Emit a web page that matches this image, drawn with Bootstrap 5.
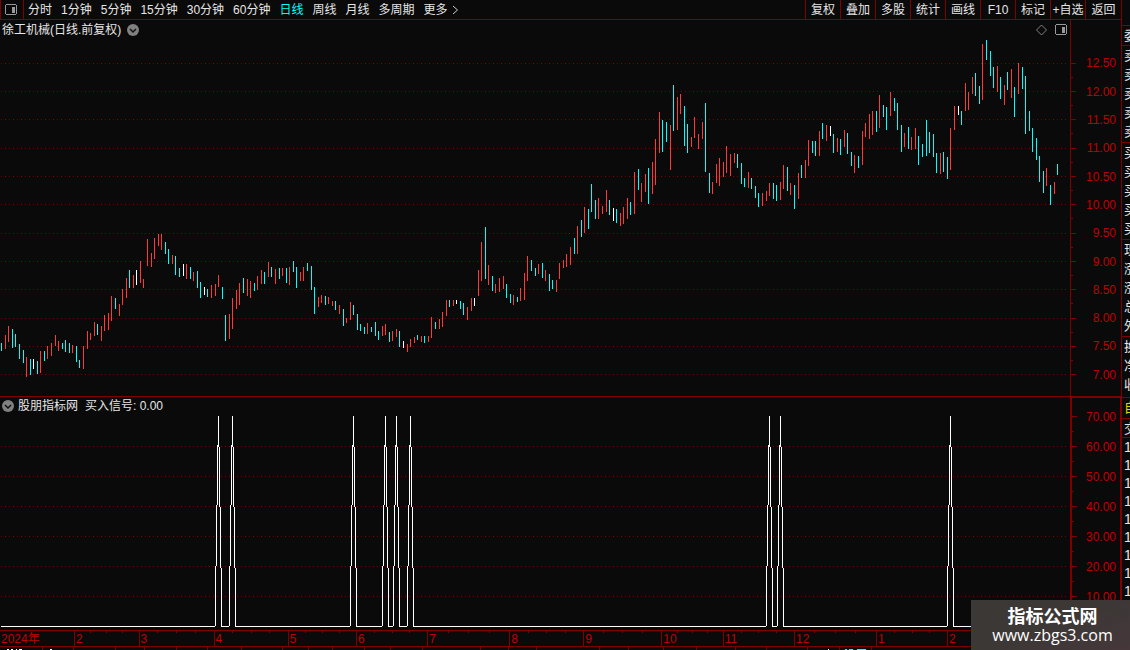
<!DOCTYPE html>
<html lang="zh-CN">
<head>
<meta charset="utf-8">
<meta name="viewport" content="width=device-width, initial-scale=1">
<title>徐工机械 日线</title>
<link href="https://cdn.jsdelivr.net/npm/bootstrap@5.3.0/dist/css/bootstrap.min.css" rel="stylesheet">
<style>
:root{--line:#800000;--label:#c00000;--paper:#0a0a0a}
body{background:var(--paper);color:#e6e6e6;font:12px/18px "Liberation Sans","Noto Sans CJK SC",sans-serif}
button{background:none;border:0;padding:0;color:inherit;font:inherit;line-height:18px;white-space:nowrap}
main{min-width:0}
svg{display:block;shape-rendering:crispEdges}
svg.smooth{shape-rendering:auto}
.toolbar{height:20px;border-bottom:1px solid var(--line)}
.layout-btn{width:24px;border:solid var(--line);border-width:0 1px;padding-left:4px}
.periods{gap:9px;padding-left:4px}
.periods .active{color:#0ff}
.tools button{width:35px;border-left:1px solid var(--line);text-align:center}
.tools button:last-child{width:36px}
.pane{min-height:0;flex-basis:0}
.pane-price{flex-grow:376}
.pane-signal{flex-grow:233;border-top:1px solid var(--line)}
.plot svg.fill{position:absolute;inset:0;width:100%;height:100%}
.caption{position:absolute;left:2px;top:0;right:3px;padding-top:1px}
.pane-signal .caption{left:1px;padding-top:0;gap:3px}
.yscale{width:51px;border-left:1px solid var(--line);color:var(--label);position:relative}
.pane-signal .yscale{border:solid var(--line);border-width:1px 1px 0 2px}
.yscale svg{position:absolute;left:0;top:0;width:5px;height:100%}
.yscale div{min-height:0;flex-basis:0;display:flex;align-items:center;justify-content:flex-end;padding-right:5px}
.pane-signal .yscale div{padding-right:4px}
.months{height:17px;border:solid var(--line);border-width:1px 0;color:var(--label);padding-right:51px}
.month{position:relative;flex-basis:0;min-width:0;border-left:1px solid var(--line);padding-left:1px;line-height:17px;white-space:nowrap}
.month:first-child{border-left:0}
.ticks{position:absolute;inset:0 0 auto 0;height:2px}
.ticks i{flex:1}
.ticks i+i{border-left:1px solid var(--line)}
.side{width:9px;border-left:1px solid var(--line);overflow:hidden}
.side section{border-bottom:1px solid var(--line);padding:0 0 1px 2px;white-space:nowrap;flex:none;font-size:13px}
.side section div{height:19px;line-height:19px}
.side .spacer{height:26px}
.side .single{padding-bottom:0}
.side .detail{padding-bottom:3px}
.side .chosen{color:#dada00}
.side .single.deal div{height:18px}
.side .trades{border:0}
.side .trades div{height:18px;line-height:18px;font-size:14px}
.site{position:absolute;right:0;bottom:0;width:159px;height:50px;background:linear-gradient(160deg,#3b3836 45%,#46373a);color:#fff;text-align:center;padding:4px 0 0 4px}
.site strong{display:block;font:bold 18px/22px "Noto Sans CJK SC",sans-serif}
.site a{display:block;color:#fff;text-decoration:none;font:16px/18px "Open Sans",sans-serif}
</style>
</head>
<body class="vh-100 d-flex overflow-hidden position-relative">
<main class="d-flex flex-column flex-grow-1">
  <nav class="toolbar d-flex flex-shrink-0" aria-label="周期">
    <button class="layout-btn" aria-label="布局"><svg width="13" height="12"><rect x=".5" y=".5" width="11" height="10" rx="2" fill="none" stroke="#999"/><rect x="7" y="3" width="3" height="6" fill="#999"/></svg></button>
    <div class="periods d-flex">
      <button>分时</button><button>1分钟</button><button>5分钟</button><button>15分钟</button><button>30分钟</button><button>60分钟</button><button class="active">日线</button><button>周线</button><button>月线</button><button>多周期</button><button class="d-flex align-items-center gap-1">更多 <svg class="smooth" width="7" height="10"><path d="M1 1l4.500 4L1 9" fill="none" stroke="#ccc"/></svg></button>
    </div>
    <div class="tools d-flex ms-auto">
      <button>复权</button><button>叠加</button><button>多股</button><button>统计</button><button>画线</button><button>F10</button><button>标记</button><button>+自选</button><button>返回</button>
    </div>
  </nav>
  <section class="pane pane-price d-flex">
    <div class="plot flex-grow-1 position-relative">
      <svg class="fill" id="price" viewBox="0 20 1070 376" preserveAspectRatio="none"></svg>
      <div class="caption d-flex align-items-center">
        <span>徐工机械(日线.前复权)</span>
        <svg class="smooth ms-1" width="14" height="14"><circle cx="8" cy="7" r="6" fill="#808080"/><path d="M5 6l3 3 3-3" fill="none" stroke="#111" stroke-width="1.500"/></svg>
        <svg class="smooth ms-auto" width="12" height="12"><path d="M6.500 1l5 5-5 5-5-5z" fill="none" stroke="#808080"/></svg>
        <svg class="ms-2" width="12" height="12"><rect x=".5" y=".5" width="11" height="10" rx="2" fill="none" stroke="#999"/><rect x="7" y="3" width="3" height="6" fill="#999"/></svg>
      </div>
    </div>
    <div class="yscale d-flex flex-column" id="priceScale"></div>
  </section>
  <section class="pane pane-signal d-flex">
    <div class="plot flex-grow-1 position-relative">
      <svg class="fill" id="signal" viewBox="0 397 1070 233" preserveAspectRatio="none"></svg>
      <div class="caption d-flex align-items-center">
        <svg class="smooth" width="14" height="14"><circle cx="7" cy="7" r="6" fill="#808080"/><path d="M4 6l3 3 3-3" fill="none" stroke="#111" stroke-width="1.500"/></svg>
        <span>股朋指标网</span><span class="ps-1">买入信号: 0.00</span>
      </div>
    </div>
    <div class="yscale d-flex flex-column" id="signalScale"></div>
  </section>
  <div class="months d-flex flex-shrink-0" id="months"></div>
  <svg class="flex-shrink-0" id="tabs" width="100%" height="3" viewBox="0 647 1121 3" preserveAspectRatio="none"></svg>
</main>
<aside class="side d-flex flex-column flex-shrink-0" aria-label="盘口">
  <section class="spacer"></section>
  <section class="single"><div>委</div></section>
  <section><div>卖</div><div>卖</div><div>卖</div><div>卖</div><div>卖</div></section>
  <section><div>买</div><div>买</div><div>买</div><div>买</div><div>买</div></section>
  <section><div>现</div><div>涨</div><div>涨</div><div>总</div><div>外</div></section>
  <section class="detail"><div>换</div><div>净</div><div>收</div></section>
  <section class="chosen"><div>自</div></section>
  <section class="single deal"><div>交</div></section>
  <section class="trades"><div>1</div><div>1</div><div>1</div><div>1</div><div>1</div><div>1</div><div>1</div><div>1</div><div>1</div></section>
</aside>
<footer class="site"><strong>指标公式网</strong><a href="#">www.zbgs3.com</a></footer>
<script src="https://cdn.jsdelivr.net/npm/bootstrap@5.3.0/dist/js/bootstrap.bundle.min.js"></script>
<script>
// one bar per trading day: x, high, low, colour (c falling, r rising, w unchanged)
const bars = `1 343 351c,5 335 349r,8 326 342r,12 329 348c,15 334 347c,19 344 359c,23 350 363c,26 357 377r,30 359 375c,33 359 369w,37 361 374c,40 351 373r,44 351 361c,47 346 359r,51 343 356r,55 335 346r,58 341 351r,62 343 349c,65 340 352c,69 343 353c,72 345 353r,76 346 362c,79 360 368c,83 346 369r,87 331 349r,90 333 340r,94 322 336r,97 324 335c,101 326 341r,104 315 331r,108 313 330r,111 296 321r,115 298 309c,119 304 316r,122 289 305r,126 278 298r,129 270 288c,133 275 288r,136 270 285w,140 261 283r,143 279 288r,147 239 266r,151 253 267r,154 238 259r,158 234 246r,161 234 250r,165 242 254c,168 249 264c,172 255 264r,175 256 275c,179 268 277c,183 264 276w,186 264 279r,190 267 279c,193 272 281r,197 271 288c,200 282 298c,204 287 295w,207 289 297c,211 285 298r,215 284 296r,218 275 287r,222 287 299c,225 315 341c,229 314 339r,232 298 329r,236 290 309r,239 283 305r,243 278 293c,247 279 296r,250 281 298r,254 283 291c,257 276 290r,261 270 284r,264 272 284c,268 262 277r,271 267 277c,275 269 284r,279 268 279c,282 268 276r,286 268 283c,289 267 285r,293 261 272c,296 267 288c,300 272 281r,303 267 281r,307 263 271c,311 266 290c,314 287 314c,318 297 307r,321 295 303r,325 296 305c,328 297 304r,332 301 306r,335 301 310c,339 305 314r,343 309 326c,346 318 323r,350 302 320r,353 305 315c,357 314 330c,360 324 331c,364 327 334c,367 323 334r,371 327 332c,375 322 336c,378 331 340c,382 326 336r,385 324 335r,389 332 342c,392 331 341r,396 329 337r,399 331 347c,403 341 348w,407 344 352r,410 339 347r,414 337 343r,417 335 340c,421 336 342r,424 336 343c,428 336 342r,431 317 338r,435 322 329c,439 319 329r,442 312 327r,446 300 316r,449 300 307c,453 300 306r,456 300 304w,460 301 309c,463 303 315c,467 307 320r,471 298 311r,474 298 306w,478 270 296r,481 242 281r,485 227 279c,488 265 285r,492 276 291c,495 284 293r,499 278 292r,503 276 289r,506 284 298c,510 294 303c,513 295 305r,517 297 302c,520 288 301r,524 273 300r,527 256 281r,531 260 271c,535 268 276c,538 264 274r,542 263 278c,545 270 281r,549 274 291c,552 280 289c,556 280 292r,559 263 279r,563 260 268r,566 254 267r,570 247 265r,574 238 254c,577 226 254r,581 220 237c,584 207 233r,588 209 229c,591 184 212c,595 200 219c,598 198 219r,602 206 214r,606 190 212r,609 200 215c,613 208 221w,616 209 223c,620 213 226r,623 207 224r,627 198 219r,630 202 215c,634 172 214r,638 169 190c,641 183 202r,645 174 192r,648 168 204c,652 162 194r,655 139 185r,659 112 153r,662 120 152c,666 122 142c,670 125 170r,673 85 131c,677 97 130r,680 94 114r,684 106 146c,687 124 153c,691 137 147r,694 117 138r,698 134 149r,702 122 139r,705 103 172c,709 173 193c,712 182 194r,716 164 183r,719 158 186r,723 162 177r,726 146 173r,730 154 176r,734 153 163r,737 154 168c,741 163 184c,744 178 187c,748 172 188r,751 178 189c,755 186 198c,758 193 207c,762 193 206r,766 191 201r,769 183 196r,773 183 199c,776 185 201c,780 182 200r,783 165 189r,787 167 191c,790 183 195r,794 185 209c,798 173 199r,801 165 178c,805 160 178r,808 140 166r,812 141 153c,815 141 156c,819 131 156r,822 123 139c,826 125 141r,830 126 136w,833 134 153c,837 138 152r,840 139 155c,844 130 147r,847 133 154c,851 152 166c,854 155 173r,858 156 168c,862 131 165r,865 123 137r,869 114 139r,872 111 135r,876 111 132c,879 95 128r,883 105 117c,886 107 130c,890 92 116r,894 98 111c,897 103 130c,901 125 152c,904 133 147r,908 127 149c,911 137 150r,915 128 149r,918 136 165c,922 144 157c,926 120 156c,929 132 153c,933 134 157c,936 153 173c,940 153 174r,943 152 172c,947 157 179c,950 128 170r,954 106 130r,958 106 115w,961 111 125c,965 83 111r,968 92 110r,972 77 94r,975 73 96c,979 86 104c,982 44 100r,986 40 60c,990 51 76c,993 67 88c,997 66 92r,1000 77 99c,1004 85 105r,1007 72 90c,1011 69 98r,1014 87 117c,1018 63 94r,1022 67 89c,1025 76 134c,1029 111 131c,1032 128 152c,1036 138 160c,1039 156 182c,1043 171 193c,1046 168 186r,1050 185 205c,1054 182 194r,1057 164 175c`;
const paint = {c:'#00ffff', r:'#ff3838', w:'#ffffff'};
const $ = id => document.getElementById(id);
const stroke = (d, colour, extra='') => `<path d="${d}" fill="none" stroke="${colour}" ${extra}/>`;
const dots = ys => stroke(ys.map(y => `M1 ${y+.5}H1067`).join(''), '#800000', 'stroke-dasharray="1 3"');

const priceYs = [63,91,119,148,176,204,233,261,289,318,346,374];
const byColour = {c:'', r:'', w:''};
bars.split(',').forEach(b => {
  const [x, hi, lo] = b.slice(0,-1).split(' ').map(Number);
  byColour[b.slice(-1)] += `M${x+.5} ${hi}V${lo}`;
});
$('price').innerHTML = dots(priceYs) + Object.keys(byColour).map(k => stroke(byColour[k], paint[k])).join('');

const signalYs = [416,446,476,506,536,566,596];
const peaks = [218,232,353,385,396,410,769,780,950];
$('signal').innerHTML = dots(signalYs.slice(1)) +
  stroke('M1 626.5' + peaks.map(x => `H${x-3}L${x+.5} 416L${x+4} 626.5`).join('') + 'H1058', '#fff');

function scale(el, top, height, ys, labels, before, each, after) {
  const minor = ys.slice(0,-1).map((y,i) => Math.floor((y+ys[i+1])/2));
  el.innerHTML = `<svg viewBox="0 ${top} 5 ${height}" preserveAspectRatio="none">` +
    stroke(ys.map(y => `M0 ${y+.5}H5`).join('') + minor.map(y => `M0 ${y+.5}H2`).join(''), '#800000') + '</svg>' +
    `<div style="flex-grow:${before}"></div>` +
    labels.map(t => `<div style="flex-grow:${each}">${t}</div>`).join('') +
    `<div style="flex-grow:${after}"></div>`;
}
scale($('priceScale'), 20, 376, priceYs, priceYs.map((y,i) => (12.5-i/2).toFixed(2)), 293, 283, 71);
scale($('signalScale'), 398, 232, signalYs, signalYs.map((y,i) => (70-i*10).toFixed(2)), 4, 30, 18);

const months = [['2024年',75],['2',64],['3',75],['4',74],['5',68],['6',71],['7',82],['8',74],['9',78],['10',61],['11',71],['12',82],['1',71],['2',124]];
$('months').innerHTML = months.map(([t,w],i) => `<div class="month" style="flex-grow:${w}">${t}` +
  (i ? '<div class="ticks d-flex"><i></i><i></i><i></i><i></i></div>' : '') + '</div>').join('');

$('tabs').innerHTML = stroke([42,73,115,144,176,207,241,282,308,332,364,390,422,480,508,536,599,628,663,696,735,766,807,839,871].map(x => `M${x+.5} 647v3`).join(''), '#800000') +
  stroke('M7 649.5h2m2 0h2m3 0h1m2 0h3M50 649.5h2M828 649.5h1', '#fff') + stroke('M845 649.5h2m2 0h4m4 0h9', '#0ff');
</script>
</body>
</html>
